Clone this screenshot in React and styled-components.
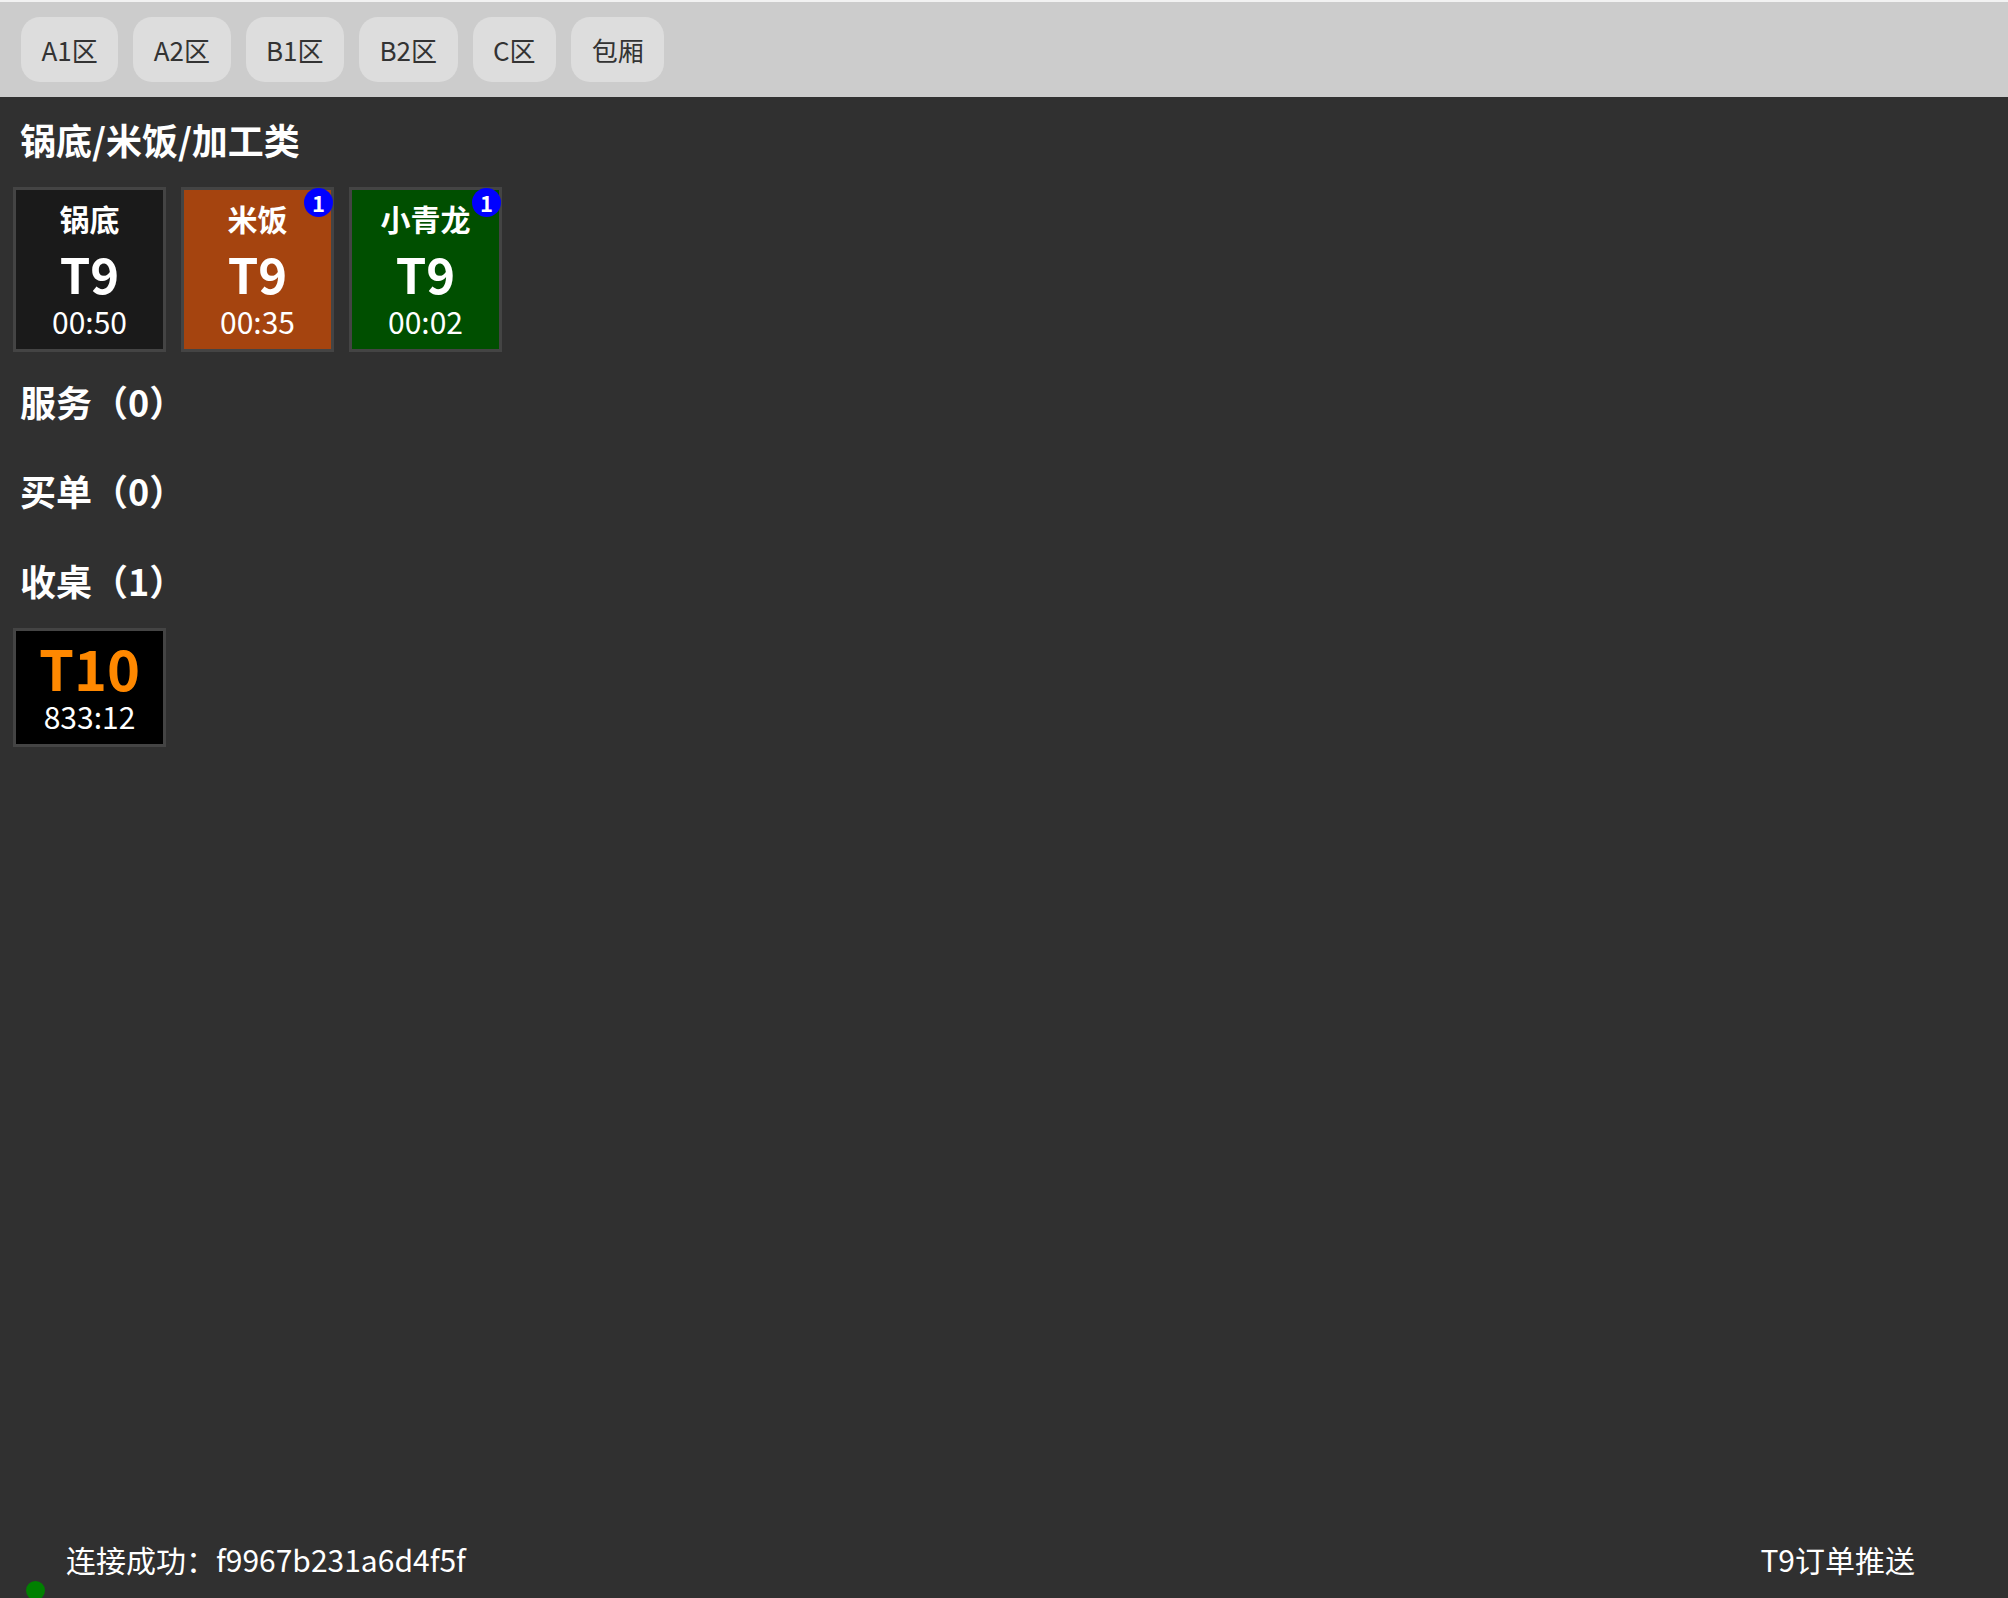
import React from "react";
import styled, { createGlobalStyle } from "styled-components";

const GlobalStyle = createGlobalStyle`
  html, body {
    margin: 0;
    padding: 0;
    background: #303030;
  }
  * {
    box-sizing: border-box;
  }
  body {
    font-family: "Noto Sans CJK SC", "Noto Sans", sans-serif;
  }
`;

const Page = styled.div`
  height: 100vh;
  display: flex;
  flex-direction: column;
  background: #303030;
  color: #ffffff;
  overflow: hidden;
`;

const TopBar = styled.div`
  display: flex;
  gap: 15px;
  padding: 15px 21px;
  background: #cccccc;
  border-top: 2px solid #f2f2f2;
`;

const AreaButton = styled.button`
  height: 65px;
  padding: 0 20.5px;
  border: 0;
  border-radius: 19px;
  background: #dddddd;
  color: #333333;
  font-family: "Noto Sans CJK SC", sans-serif;
  font-size: 26px;
  line-height: 39px;
  cursor: pointer;
`;

const Main = styled.div`
  flex: 1;
  padding: 15px 13px 0;
`;

const Section = styled.section`
  display: flex;
  flex-direction: column;
  gap: 21px;
  margin-top: ${({ $top }) => $top}px;
`;

const Heading = styled.h2`
  margin: 0;
  padding-left: 7px;
  font-size: 36px;
  font-weight: 700;
  line-height: 54px;
`;

const CardRow = styled.div`
  display: flex;
  gap: 15px;
`;

const Card = styled.div`
  position: relative;
  width: 153px;
  height: ${({ $h }) => $h}px;
  padding-top: ${({ $pt }) => $pt}px;
  border: 3px solid #444444;
  background: ${({ $bg }) => $bg};
  display: flex;
  flex-direction: column;
  align-items: center;
`;

const CardTitle = styled.div`
  font-size: 30px;
  font-weight: 700;
  line-height: 1;
`;

const TableNo = styled.div`
  margin-top: ${({ $mt }) => $mt}px;
  font-size: ${({ $size }) => $size}px;
  font-weight: 700;
  line-height: 1;
  color: ${({ $color }) => $color || "#ffffff"};
`;

const Timer = styled.div`
  margin-top: ${({ $mt }) => $mt}px;
  font-size: 30px;
  line-height: 1;
`;

const Badge = styled.span`
  position: absolute;
  top: -2px;
  right: -2px;
  width: 29px;
  height: 29px;
  border-radius: 50%;
  background: #0000ff;
  color: #ffffff;
  font-size: 22px;
  font-weight: 700;
  line-height: 29px;
  text-align: center;
`;

const Footer = styled.div`
  height: 61px;
  flex-shrink: 0;
  display: flex;
  align-items: flex-start;
  padding: 0 93px 0 26px;
  overflow: hidden;
  font-size: 30px;
  line-height: 45px;
`;

const Dot = styled.span`
  width: 19px;
  height: 19px;
  margin-top: 44px;
  margin-right: 21px;
  border-radius: 50%;
  background: #008000;
  flex-shrink: 0;
`;

const Status = styled.div`
  flex: 1;
`;

const areas = ["A1区", "A2区", "B1区", "B2区", "C区", "包厢"];

const kitchen = [
  { name: "锅底", table: "T9", time: "00:50", bg: "#1a1a1a" },
  { name: "米饭", table: "T9", time: "00:35", bg: "#a5440f", badge: 1 },
  { name: "小青龙", table: "T9", time: "00:02", bg: "#004f00", badge: 1 },
];

const clearing = [{ table: "T10", time: "833:12" }];

export default function App() {
  return (
    <Page>
      <GlobalStyle />
      <TopBar>
        {areas.map((a) => (
          <AreaButton key={a}>{a}</AreaButton>
        ))}
      </TopBar>
      <Main>
        <Section $top={0}>
          <Heading>锅底/米饭/加工类</Heading>
          <CardRow>
            {kitchen.map((item, i) => (
              <Card key={i} $bg={item.bg} $h={165} $pt={13}>
                {item.badge && <Badge>{item.badge}</Badge>}
                <CardTitle>{item.name}</CardTitle>
                <TableNo $size={49} $mt={15}>
                  {item.table}
                </TableNo>
                <Timer $mt={9}>{item.time}</Timer>
              </Card>
            ))}
          </CardRow>
        </Section>
        <Section $top={22}>
          <Heading>服务（0）</Heading>
        </Section>
        <Section $top={35}>
          <Heading>买单（0）</Heading>
        </Section>
        <Section $top={36}>
          <Heading>收桌（1）</Heading>
          <CardRow>
            {clearing.map((item, i) => (
              <Card key={i} $bg="#000000" $h={119} $pt={8}>
                <TableNo $size={56} $mt={0} $color="#ff8800">
                  {item.table}
                </TableNo>
                <Timer $mt={6}>{item.time}</Timer>
              </Card>
            ))}
          </CardRow>
        </Section>
      </Main>
      <Footer>
        <Dot />
        <Status>连接成功：f9967b231a6d4f5f</Status>
        <div>T9订单推送</div>
      </Footer>
    </Page>
  );
}
